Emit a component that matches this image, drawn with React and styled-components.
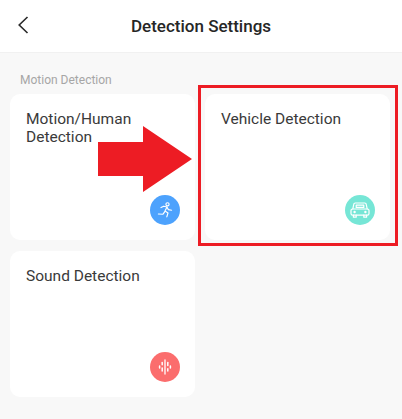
import React from "react";
import styled, { createGlobalStyle } from "styled-components";

const GlobalStyle = createGlobalStyle`
  html, body {
    margin: 0;
    padding: 0;
    background: #f8f8f8;
  }
  * {
    box-sizing: border-box;
  }
`;

const Page = styled.div`
  position: relative;
  width: 402px;
  height: 419px;
  overflow: hidden;
  background: #f8f8f8;
  font-family: Roboto, "Liberation Sans", sans-serif;
`;

const Header = styled.header`
  display: flex;
  align-items: center;
  justify-content: center;
  position: relative;
  height: 53px;
  background: #fff;
  border-bottom: 1px solid #f1f1f1;
`;

const BackButton = styled.button`
  position: absolute;
  left: 16px;
  top: 14px;
  display: flex;
  padding: 0;
  border: 0;
  background: none;
`;

const Title = styled.h1`
  margin: 0;
  font-size: 17px;
  font-weight: 500;
  color: #262626;
`;

const Content = styled.main`
  padding: 20px 12px 0 10px;
`;

const SectionLabel = styled.div`
  margin: 0 0 7px 10px;
  height: 14px;
  font-size: 12px;
  line-height: 14px;
  color: #a6a6a6;
`;

const Grid = styled.div`
  display: grid;
  grid-template-columns: 185px 185px;
  grid-auto-rows: 146px;
  gap: 11px 10px;
`;

const Card = styled.div`
  display: flex;
  flex-direction: column;
  justify-content: space-between;
  padding: 16px 15.5px 15px 16px;
  background: #fff;
  border-radius: 10px;
`;

const CardTitle = styled.div`
  font-size: 15.5px;
  line-height: 18px;
  color: #3a3a3a;
`;

const IconBadge = styled.div`
  align-self: flex-end;
  display: flex;
  align-items: center;
  justify-content: center;
  width: 30px;
  height: 30px;
  border-radius: 50%;
  background: ${(p) => p.$color};
`;

const Highlight = styled.div`
  position: absolute;
  left: 198px;
  top: 85px;
  width: 200px;
  height: 161px;
  border: 3px solid #ed1c24;
`;

const Arrow = styled.svg`
  position: absolute;
  left: 98px;
  top: 126px;
`;

const RunIcon = () => (
  <svg width="20" height="20" viewBox="0 0 20 20" fill="none" stroke="#fff" strokeWidth="1.15" strokeLinecap="round" strokeLinejoin="round">
    <circle cx="12.5" cy="4.3" r="1.6" />
    <path d="M6 7.6 L8.8 6.2 L12 7 L10 11 L13 13 L11.8 16.8" />
    <path d="M12 7.2 L13.4 9.6 L16.6 10.2" />
    <path d="M9.8 11.6 L8 14.2 L3.4 14" />
  </svg>
);

const CarIcon = () => (
  <svg width="20" height="18" viewBox="0 0 20 18" fill="none" stroke="#fff" strokeWidth="1.2" strokeLinecap="round" strokeLinejoin="round">
    <path d="M2.8 8 L3.8 3.2 Q4 2 5.2 2 H14.8 Q16 2 16.2 3.2 L17.2 8" />
    <rect x="6.2" y="4.2" width="7.6" height="2.2" />
    <rect x="1" y="8" width="18" height="6.2" rx="1.6" />
    <path d="M3.4 14.2 V16.2 H6.2 V14.2" />
    <path d="M13.8 14.2 V16.2 H16.6 V14.2" />
    <circle cx="4.6" cy="11" r="0.6" />
    <circle cx="15.4" cy="11" r="0.6" />
  </svg>
);

const SoundIcon = () => (
  <svg width="18" height="18" viewBox="0 0 18 18" fill="none" stroke="#fff" strokeLinecap="round">
    <path d="M9 2 V16" strokeWidth="1.3" />
    <path d="M6.2 4.6 V6.8" strokeWidth="1.5" />
    <path d="M6.2 10 V13" strokeWidth="1.5" />
    <path d="M3.6 8 V10" strokeWidth="1.5" />
    <path d="M11.8 4.6 V7.6" strokeWidth="1.5" />
    <path d="M11.8 10.8 V13" strokeWidth="1.5" />
    <path d="M14.4 8 V10" strokeWidth="1.5" />
  </svg>
);

export default function App() {
  return (
    <Page>
      <GlobalStyle />
      <Header>
        <BackButton aria-label="Back">
          <svg width="14" height="22" viewBox="0 0 14 22" fill="none" stroke="#2a2a2a" strokeWidth="1.6">
            <path d="M11.5 3 L3.2 11 L11.5 19" />
          </svg>
        </BackButton>
        <Title>Detection Settings</Title>
      </Header>
      <Content>
        <SectionLabel>Motion Detection</SectionLabel>
        <Grid>
          <Card>
            <CardTitle>Motion/Human<br />Detection</CardTitle>
            <IconBadge $color="#4da2fd"><RunIcon /></IconBadge>
          </Card>
          <Card>
            <CardTitle>Vehicle Detection</CardTitle>
            <IconBadge $color="#76e6d6"><CarIcon /></IconBadge>
          </Card>
          <Card>
            <CardTitle>Sound Detection</CardTitle>
            <IconBadge $color="#fb6d6d"><SoundIcon /></IconBadge>
          </Card>
        </Grid>
      </Content>
      <Highlight />
      <Arrow width="95" height="67" viewBox="0 0 95 67">
        <path d="M0 16 H45 V0 L94 33 L45 66 V50 H0 Z" fill="#ed1c24" />
      </Arrow>
    </Page>
  );
}
